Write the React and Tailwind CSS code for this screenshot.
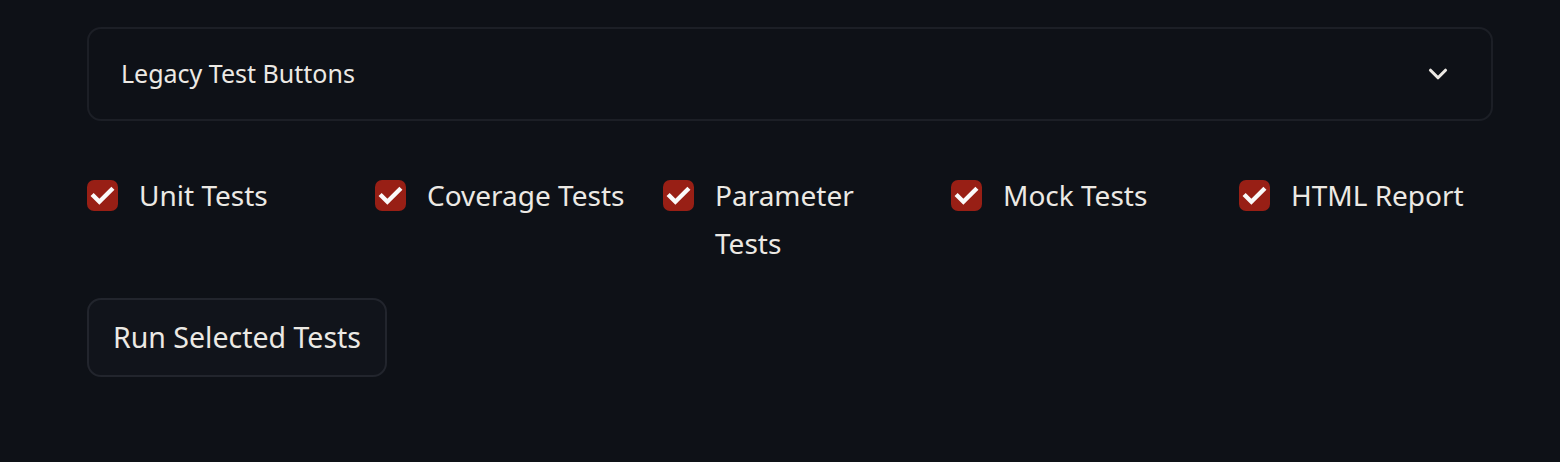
import React, { useState } from 'react';
import { ChevronDown } from 'lucide-react';

const tests = ['Unit Tests', 'Coverage Tests', 'Parameter Tests', 'Mock Tests', 'HTML Report'];

const Check = ({ label }) => {
    const [on, setOn] = useState(true);
    return (
        <label className="flex items-start gap-[21px] cursor-pointer" onClick={() => setOn(!on)}>
            <span className="mt-[9px] w-[31px] h-[31px] shrink-0 rounded-[7px] bg-[#981f15] flex items-center justify-center">
                {on && (
                    <svg width="25" height="25" viewBox="0 0 24 24" fill="none">
                        <path d="M3.5 12.5l5.5 5.5L20.5 6.5" stroke="#fafafa" strokeWidth="4.2" strokeLinecap="square" />
                    </svg>
                )}
            </span>
            <span className="text-[28px] leading-[48px] text-[#ece9e4] pr-8">{label}</span>
        </label>
    );
};

export default function App() {
    return (
        <div className="min-h-[462px] bg-[#0e1117] px-[87px] pt-[27px]" style={{ fontFamily: '"Noto Sans", sans-serif' }}>
            <div className="w-[1406px] h-[94px] rounded-[14px] border-2 border-[#1c1f26] flex items-center justify-between pl-[32px] pr-[38px]">
                <span className="text-[25px] text-[#ece9e4]">Legacy Test Buttons</span>
                <ChevronDown size={30} strokeWidth={2.5} className="text-[#ece9e4]" />
            </div>
            <div className="grid grid-cols-[288px_288px_288px_288px_288px] mt-[50px]">
                {tests.map((t) => <Check key={t} label={t} />)}
            </div>
            <button className="mt-[31px] h-[79px] px-[24px] rounded-[14px] border-2 border-[#22252d] bg-[#11141b] text-[28.5px] text-[#ece9e4]">
                Run Selected Tests
            </button>
        </div>
    );
}
